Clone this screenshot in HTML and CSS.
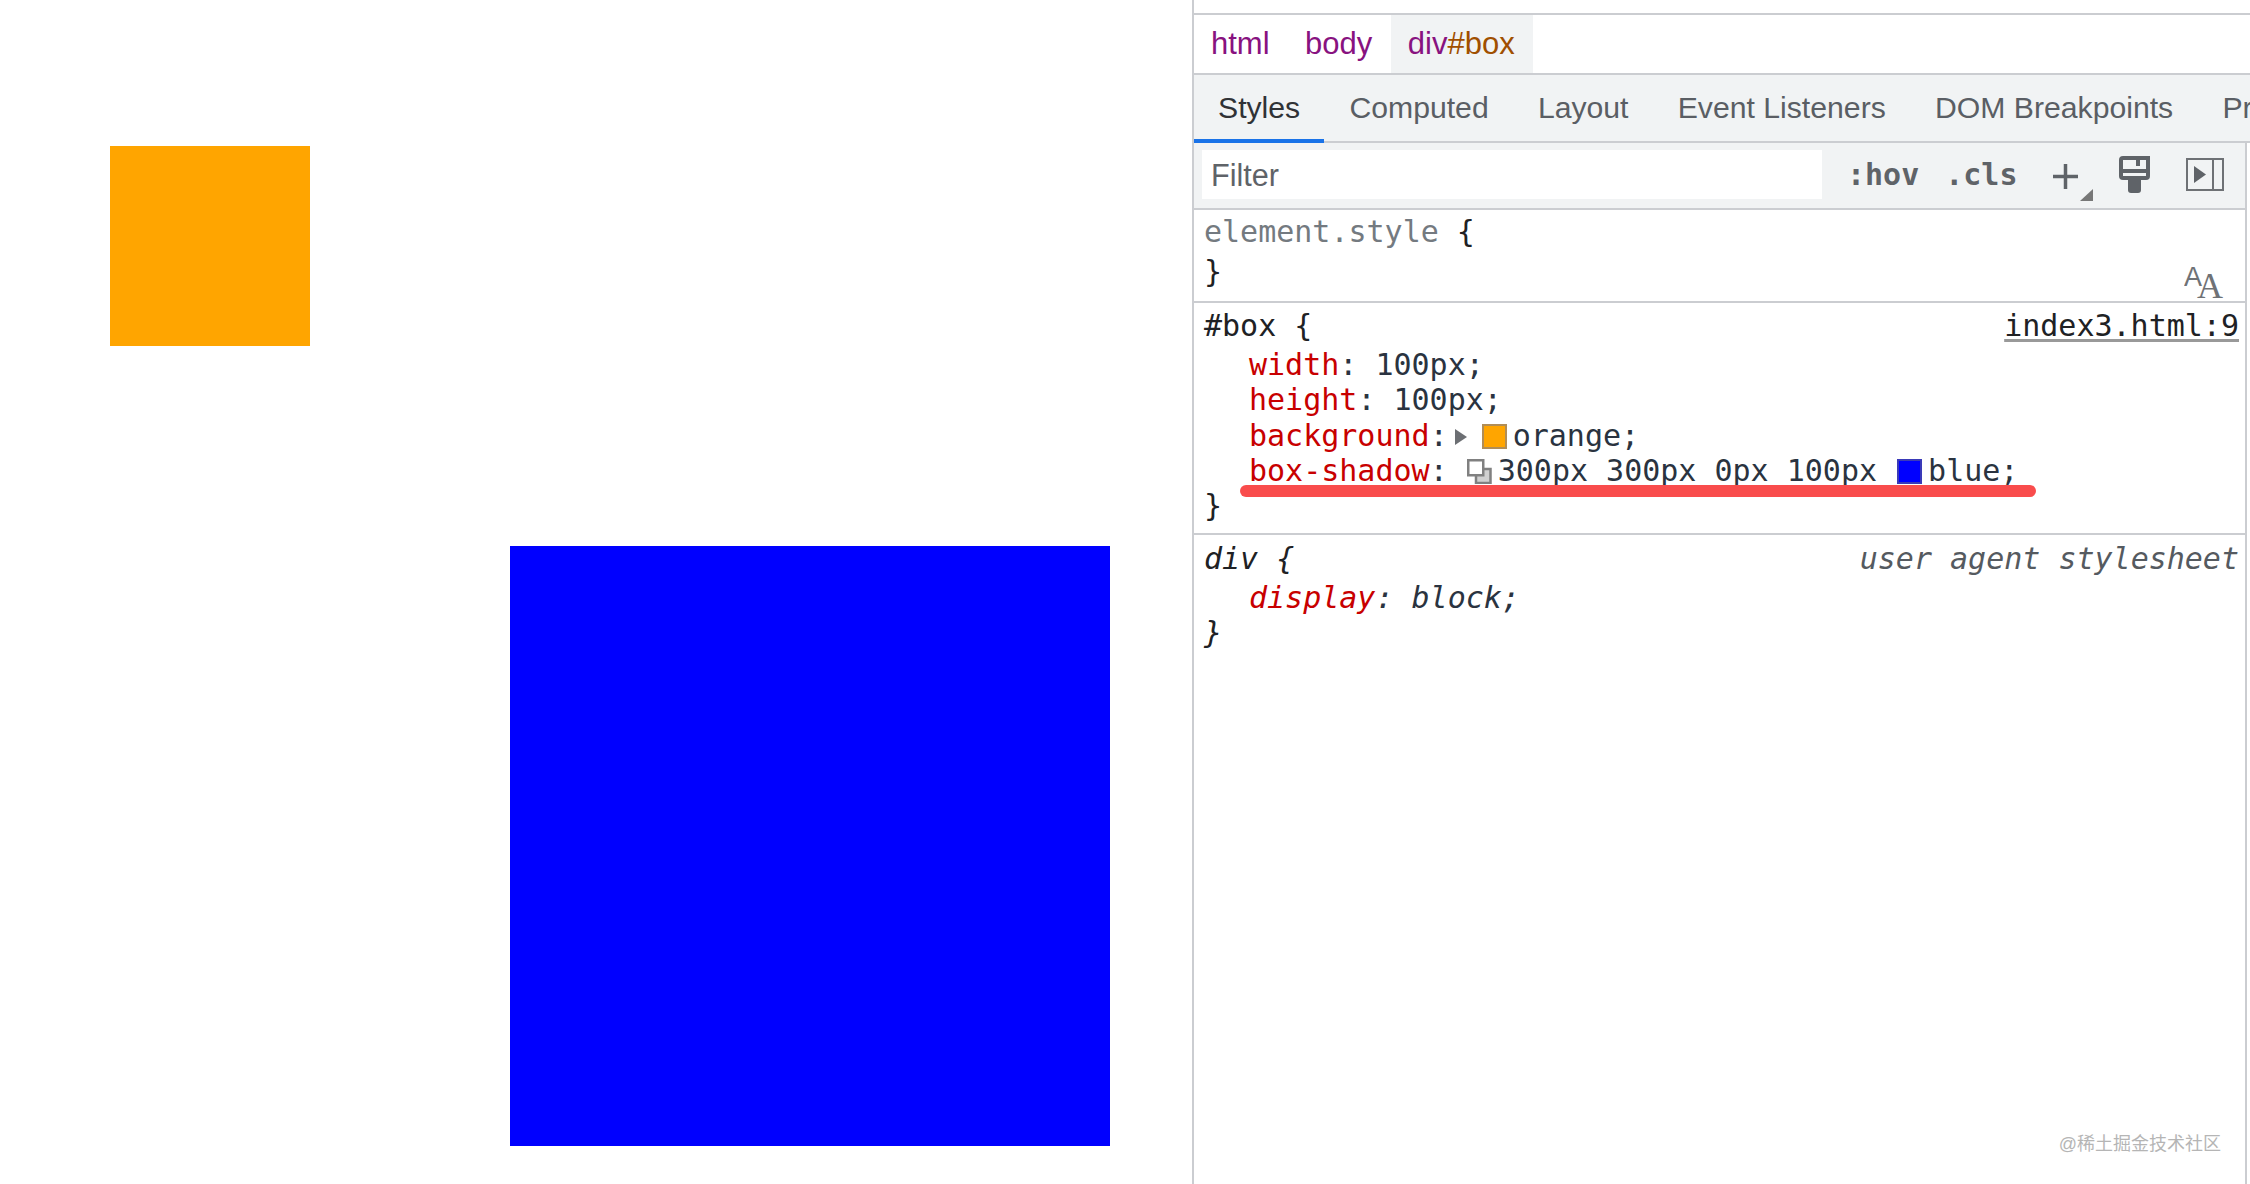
FILE: index.html
```html
<!DOCTYPE html>
<html lang="en">
<head>
<meta charset="utf-8">
<title>box-shadow devtools</title>
<link rel="stylesheet" href="styles.css">
</head>
<body>
<main class="viewport">
  <div class="box"></div>
</main>
<aside class="devtools">
  <div class="top-strip"></div>
  <nav class="crumbs">
    <span class="crumb"><span class="tag">html</span></span>
    <span class="crumb"><span class="tag">body</span></span>
    <span class="crumb crumb-active"><span class="tag">div</span><span class="id">#box</span></span>
  </nav>
  <nav class="tabs">
    <span class="tab tab-active">Styles</span>
    <span class="tab">Computed</span>
    <span class="tab">Layout</span>
    <span class="tab">Event Listeners</span>
    <span class="tab">DOM Breakpoints</span>
    <span class="tab tab-cut">Pr</span>
  </nav>
  <div class="pane">
    <div class="toolbar">
      <div class="filter">Filter</div>
      <span class="tool-text hov">:hov</span>
      <span class="tool-text cls">.cls</span>
      <svg class="icon-plus" width="44" height="40" viewBox="0 0 44 40" aria-hidden="true">
        <path d="M2 12.500H27M14.500 0V25" stroke="#5f6368" stroke-width="3.500" fill="none"/>
        <path d="M42 25V37H29Z" fill="#777"/>
      </svg>
      <svg class="icon-brush" width="31" height="37" viewBox="0 0 31 37" aria-hidden="true">
        <path d="M4 0H31V20Q31 24 27 24H4Q0 24 0 20V4Q0 0 4 0Z" fill="#5f6368"/>
        <path d="M4 4H17V10H21V4H27V13H4ZM4 17H27V20H4Z" fill="#f1f3f4"/>
        <path d="M9 24H22V34Q22 37 19 37H12Q9 37 9 34Z" fill="#5f6368"/>
      </svg>
      <svg class="icon-sidebar" width="38" height="33" viewBox="0 0 38 33" aria-hidden="true">
        <rect x="1" y="1" width="36" height="31" fill="none" stroke="#6e7175" stroke-width="2"/>
        <path d="M27 1V32" stroke="#6e7175" stroke-width="2"/>
        <path d="M8 8L20 16.500L8 25Z" fill="#5f6368"/>
      </svg>
    </div>

    <section class="rule rule-first">
      <div class="sel-line"><span><span class="muted">element.style</span> {</span></div>
      <div>}</div>
      <svg class="icon-font" width="46" height="36" viewBox="0 0 46 36" aria-hidden="true">
        <text x="0" y="21" class="aa-small">A</text>
        <text x="13" y="33" class="aa-large">A</text>
      </svg>
    </section>

    <section class="rule rule-box">
      <div class="sel-line"><span>#box {</span><span class="source">index3.html:9</span></div>
      <div class="decl"><span class="prop">width</span>: <span class="val">100px;</span></div>
      <div class="decl"><span class="prop">height</span>: <span class="val">100px;</span></div>
      <div class="decl"><span class="prop">background</span>:<span class="expand"></span><span class="swatch swatch-orange"></span><span class="val">orange;</span></div>
      <div class="decl"><span class="prop">box-shadow</span>: <svg class="icon-shadow" width="25" height="25" viewBox="0 0 25 25" aria-hidden="true"><rect x="9" y="10" width="14.500" height="14" fill="#d0d0d0" stroke="#808080" stroke-width="2.500"/><rect x="1.250" y="1.250" width="15" height="15" fill="#fff" stroke="#808080" stroke-width="2.500"/></svg><span class="val">300px 300px 0px 100px <span class="swatch swatch-blue"></span>blue;</span><span class="marker"></span></div>
      <div>}</div>
    </section>

    <section class="rule rule-agent">
      <div class="sel-line"><span>div {</span><span class="agent-source">user agent stylesheet</span></div>
      <div class="decl"><span class="prop">display</span>: <span class="val">block;</span></div>
      <div>}</div>
    </section>
  </div>
  <div class="watermark">@稀土掘金技术社区</div>
</aside>
</body>
</html>
```
FILE: styles.css
```css
* {
  box-sizing: border-box;
}

html,
body {
  margin: 0;
  height: 100%;
}

body {
  display: flex;
  height: 1184px;
  overflow: hidden;
  background: #fff;
}

.viewport {
  flex: 0 0 1192px;
  padding: 146px 0 0 110px;
  overflow: hidden;
}

.box {
  width: 200px;
  height: 200px;
  background: #ffa500;
  box-shadow: 600px 600px 0 200px #00f;
}

.devtools {
  position: relative;
  flex: 0 0 1058px;
  min-width: 0;
  overflow: hidden;
  display: flex;
  flex-direction: column;
  border-left: 2px solid #cbcdd1;
  font-family: "Liberation Sans", Arial, sans-serif;
  line-height: 34px;
}

.top-strip {
  height: 15px;
  border-bottom: 2px solid #cbcdd1;
}

.crumbs {
  display: flex;
  height: 60px;
  font-size: 31px;
  border-bottom: 2px solid #cbcdd1;
}

.crumb {
  padding: 12px 17px 0;
  margin-right: 1.500px;
}

.crumb-active {
  padding-right: 18px;
  background: #f1f3f4;
}

.tag {
  color: #881280;
}

.id {
  color: #a04f00;
}

.tabs {
  display: flex;
  gap: 1.200px;
  height: 68px;
  white-space: nowrap;
  font-size: 30.200px;
  background: #f1f3f4;
  border-bottom: 2px solid #cbcdd1;
}

.tab {
  flex: none;
  height: 68px;
  padding: 16px 24px 0;
  color: #5a5e64;
}

.tab-cut {
  padding-right: 0;
}

.tab-active {
  color: #303236;
  border-bottom: 4px solid #1a73e8;
}

.pane {
  position: relative;
  flex: 1;
  margin-right: 3px;
  border-right: 2px solid #cbcdd1;
  font-family: "DejaVu Sans Mono", "Liberation Mono", monospace;
  font-size: 30px;
  line-height: 35px;
  color: #202124;
}

.toolbar {
  display: flex;
  align-items: center;
  height: 67px;
  padding-left: 8px;
  padding-bottom: 2px;
  background: #f1f3f4;
  border-bottom: 2px solid #cbcdd1;
}

.filter {
  flex: 0 0 620px;
  height: 49px;
  padding: 8px 0 0 9px;
  background: #fff;
  color: #5f6368;
  font-family: "Liberation Sans", Arial, sans-serif;
  font-size: 30.600px;
  line-height: 34px;
}

.tool-text {
  color: #5f6368;
  font-weight: 700;
}

.hov {
  margin-left: 25px;
}

.cls {
  margin-left: 26px;
}

.icon-plus {
  margin: 18px 0 0 33px;
}

.icon-brush {
  margin: 0 0 0 24px;
}

.icon-sidebar {
  margin: 0 0 0 36px;
}

.rule {
  position: relative;
  padding: 4px 6px 12px 10px;
  border-bottom: 2px solid #cbcdd1;
}

.rule-box {
  padding-top: 5px;
  padding-bottom: 9.800px;
}

.rule-box .sel-line {
  padding-bottom: 4px;
}

.rule-box .decl {
  line-height: 35.300px;
}

.rule-agent {
  padding-top: 6px;
  border-bottom: 0;
  font-style: italic;
}

.rule-agent .decl {
  line-height: 34px;
}

.sel-line {
  display: flex;
  justify-content: space-between;
  padding-bottom: 5px;
}

.muted {
  color: #747a80;
}

.source {
  color: #202124;
  text-decoration: underline;
  text-decoration-color: #999;
  text-decoration-thickness: 3px;
  text-underline-offset: 3px;
}

.agent-source {
  color: #555a60;
}

.decl {
  position: relative;
  padding-left: 45px;
  white-space: nowrap;
  color: #2a3340;
}

.prop {
  color: #c80000;
}

.val {
  color: #2a3340;
}

.expand {
  display: inline-block;
  width: 0;
  height: 0;
  margin-left: 7px;
  border-style: solid;
  border-width: 8.500px 0 8.500px 12px;
  border-color: transparent transparent transparent #6c6f73;
  vertical-align: 1px;
}

.swatch {
  display: inline-block;
  width: 25px;
  height: 25px;
  margin-right: 6px;
  border: 2px solid;
  vertical-align: -3px;
}

.swatch-orange {
  margin-left: 15px;
  background: #ffa500;
  border-color: #b08d57;
}

.swatch-blue {
  margin-left: 2px;
  background: #00f;
  border-color: #3a3ab8;
}

.icon-shadow {
  margin: 0 6px 0 1px;
  vertical-align: -3px;
}

.marker {
  position: absolute;
  left: 36px;
  top: 32px;
  width: 796px;
  height: 12px;
  border-radius: 6px;
  background: #f94c4c;
}

.icon-font {
  position: absolute;
  right: 15px;
  top: 55px;
}

.aa-small {
  font-family: "Liberation Sans", Arial, sans-serif;
  font-size: 27px;
  fill: #6f7276;
}

.aa-large {
  font-family: "Liberation Serif", "Times New Roman", serif;
  font-size: 36px;
  fill: #6f7276;
}

.watermark {
  position: absolute;
  right: 29px;
  top: 1133px;
  font-family: "Liberation Sans", "Noto Sans CJK SC", sans-serif;
  font-size: 18px;
  line-height: 22px;
  color: #b5b5b5;
}
```
